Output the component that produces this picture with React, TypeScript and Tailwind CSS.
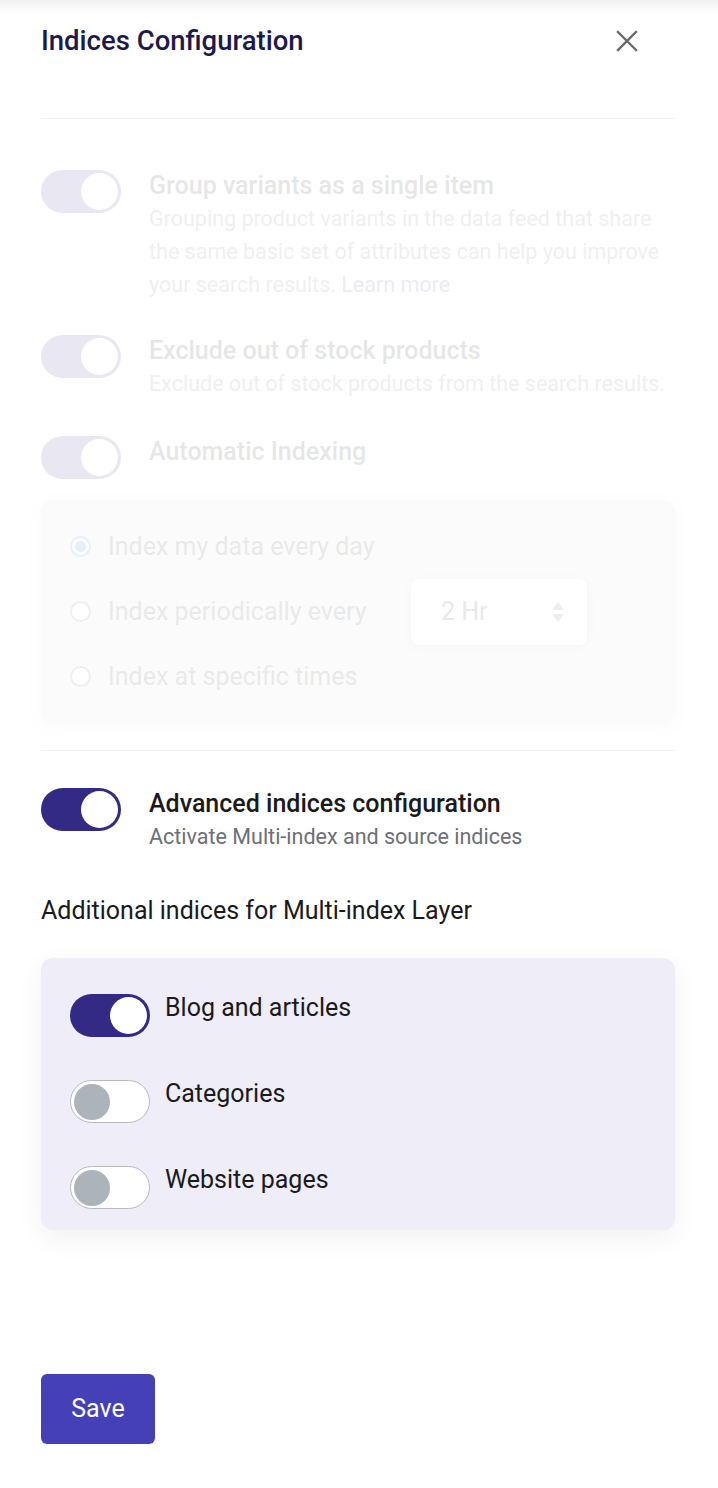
import React from "react";

function Toggle({ on }: { on: boolean }) {
  if (on) {
    return (
      <div className="relative flex h-[43px] w-[80px] shrink-0 items-center justify-end rounded-full bg-[#322a85] pr-[3px]">
        <div className="h-[37px] w-[37px] rounded-full bg-white" />
      </div>
    );
  }
  return (
    <div className="flex h-[43px] w-[80px] shrink-0 items-center rounded-full border border-[#b5b9c0] bg-white pl-[3px]">
      <div className="h-[36px] w-[36px] rounded-full bg-[#adb3ba]" />
    </div>
  );
}

function Radio({ checked }: { checked?: boolean }) {
  return checked ? (
    <div className="flex h-[21px] w-[21px] shrink-0 items-center justify-center rounded-full border-2 border-[#1a73e8] bg-white">
      <div className="h-[11px] w-[11px] rounded-full bg-[#1a73e8]" />
    </div>
  ) : (
    <div className="h-[21px] w-[21px] shrink-0 rounded-full border-2 border-[#6e6e6e] bg-white" />
  );
}

export default function App() {
  return (
    <div
      className="min-h-[1488px] w-[718px] bg-white text-[#1a1a1a]"
      style={{ fontFamily: "Roboto, 'Noto Sans', sans-serif" }}
    >
      <div className="h-[14px] bg-gradient-to-b from-[#f1f1f1] to-white" />
      <div className="pl-[41px] pr-[43px]">
        {/* Header */}
        <div className="flex items-center justify-between pt-[11px]">
          <h1 className="text-[27.5px] font-medium leading-[32px] text-[#1c1a4d]">
            Indices Configuration
          </h1>
          <button className="mr-[36px] flex h-[24px] w-[24px] items-center justify-center text-[#6b6b6b]">
            <svg width="22" height="22" viewBox="0 0 22 22" fill="none" stroke="currentColor" strokeWidth="2.4" strokeLinecap="square">
              <path d="M2 2L20 20M20 2L2 20" />
            </svg>
          </button>
        </div>
        <div className="mt-[61px] border-t border-[#f3f3f5]" />

        {/* Disabled section */}
        <div className="opacity-10">
          <div className="mt-[51px] flex items-start gap-[28px]">
            <Toggle on />
            <div>
              <div className="text-[25px] font-medium leading-[32px]">Group variants as a single item</div>
              <div className="text-[21.5px] leading-[33px] text-[#6b6f76]">
                Grouping product variants in the data feed that share the same basic set of attributes can help you improve your search results.{" "}
                <span className="text-[#4640b8]">Learn more</span>
              </div>
            </div>
          </div>
          <div className="mt-[34px] flex items-start gap-[28px]">
            <Toggle on />
            <div>
              <div className="text-[25px] font-medium leading-[32px]">Exclude out of stock products</div>
              <div className="whitespace-nowrap text-[21.5px] leading-[33px] text-[#6b6f76]">
                Exclude out of stock products from the search results.
              </div>
            </div>
          </div>
          <div className="mt-[36px] flex items-start gap-[28px]">
            <Toggle on />
            <div className="text-[25px] font-medium leading-[32px]">Automatic Indexing</div>
          </div>

          <div className="mt-[21px] rounded-xl bg-[#dcdcdc] pb-[13px] pl-[29px] pt-[14px] shadow-[0_4px_12px_rgba(0,0,0,0.15)]">
            <div className="flex h-[65px] items-center gap-[17px]">
              <Radio checked />
              <span className="text-[25px] text-[#333]">Index my data every day</span>
            </div>
            <div className="flex h-[65px] items-center gap-[17px]">
              <Radio />
              <span className="w-[286px] text-[25px] text-[#333]">Index periodically every</span>
              <div className="flex h-[66px] w-[176px] items-center justify-between rounded-lg bg-white pl-[30px] pr-[22px] shadow-[0_2px_8px_rgba(0,0,0,0.2)]">
                <span className="text-[25px] text-[#333]">2 Hr</span>
                <svg width="14" height="22" viewBox="0 0 14 22" fill="#555">
                  <path d="M7 1L13 9H1Z" />
                  <path d="M7 21L13 13H1Z" />
                </svg>
              </div>
            </div>
            <div className="flex h-[65px] items-center gap-[17px]">
              <Radio />
              <span className="text-[25px] text-[#333]">Index at specific times</span>
            </div>
          </div>
        </div>

        <div className="mt-[28px] border-t border-[#f3f3f5]" />

        {/* Advanced */}
        <div className="mt-[37px] flex items-start gap-[28px]">
          <Toggle on />
          <div>
            <div className="text-[25px] font-medium leading-[32px] text-[#1a1a1a]">Advanced indices configuration</div>
            <div className="text-[21.5px] leading-[33px] text-[#6b6f76]">Activate Multi-index and source indices</div>
          </div>
        </div>

        <div className="mt-[42px] text-[25px] leading-[32px] text-[#1a1a1a]">
          Additional indices for Multi-index Layer
        </div>

        <div className="mt-[31px] flex flex-col gap-[43px] rounded-xl bg-[#efedf8] pb-[21px] pl-[29px] pt-[36px] shadow-[0_8px_28px_rgba(0,0,0,0.06)]">
          <div className="flex items-start gap-[15px]">
            <Toggle on />
            <span className="text-[25px] leading-[27px] text-[#1a1a1a]">Blog and articles</span>
          </div>
          <div className="flex items-start gap-[15px]">
            <Toggle on={false} />
            <span className="text-[25px] leading-[27px] text-[#1a1a1a]">Categories</span>
          </div>
          <div className="flex items-start gap-[15px]">
            <Toggle on={false} />
            <span className="text-[25px] leading-[27px] text-[#1a1a1a]">Website pages</span>
          </div>
        </div>

        <button className="mt-[144px] flex h-[70px] w-[114px] items-center justify-center rounded-md bg-[#4640b8] text-[25px] text-white">
          Save
        </button>
      </div>
    </div>
  );
}
